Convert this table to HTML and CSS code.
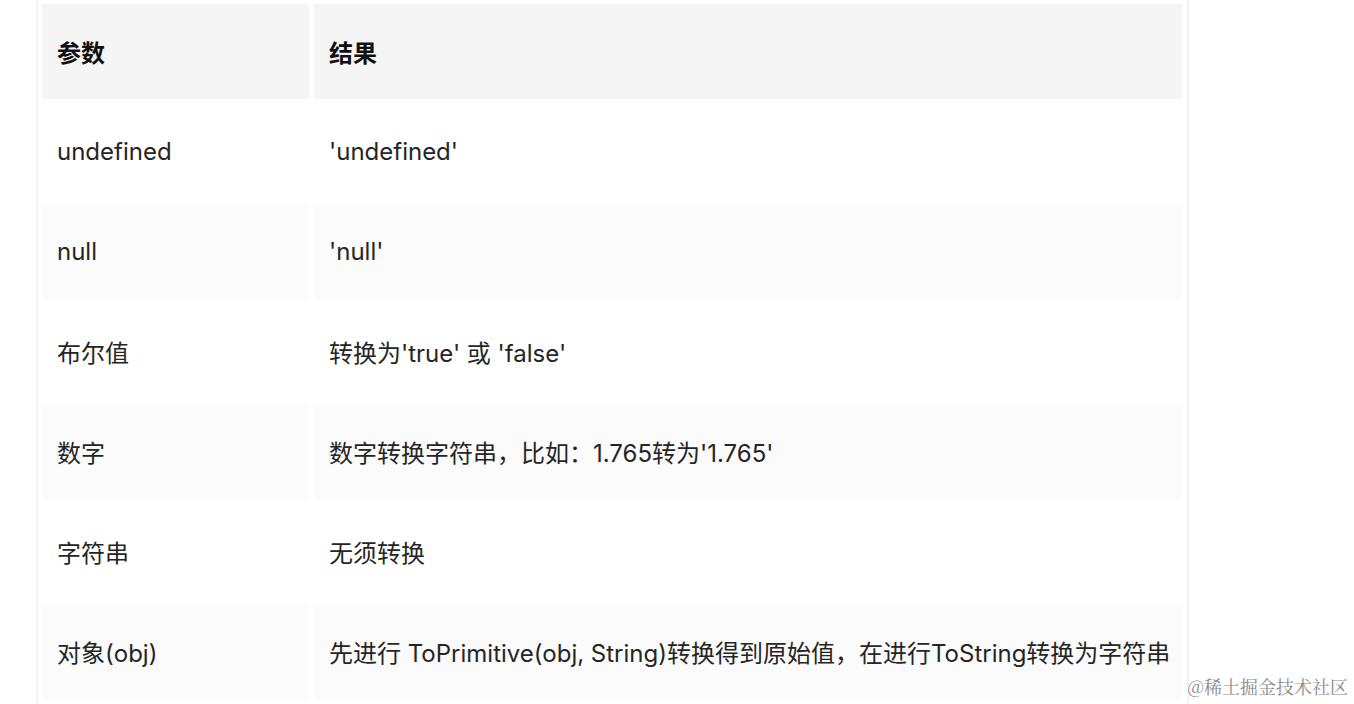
FILE: index.html
```html
<!DOCTYPE html>
<html lang="zh-CN">
<head>
<meta charset="utf-8">
<title>表格</title>
<link rel="stylesheet" href="styles.css">
</head>
<body>
<div class="frame">
  <div class="table">
    <div class="cell head">参数</div>
    <div class="cell head">结果</div>

    <div class="cell">undefined</div>
    <div class="cell">'undefined'</div>

    <div class="cell alt">null</div>
    <div class="cell alt">'null'</div>

    <div class="cell">布尔值</div>
    <div class="cell">转换为'true' 或 'false'</div>

    <div class="cell alt">数字</div>
    <div class="cell alt">数字转换字符串，比如：1.765转为'1.765'</div>

    <div class="cell">字符串</div>
    <div class="cell">无须转换</div>

    <div class="cell alt">对象(obj)</div>
    <div class="cell alt">先进行 ToPrimitive(obj, String)转换得到原始值，在进行ToString转换为字符串</div>
  </div>
</div>
<div class="watermark">@稀土掘金技术社区</div>
</body>
</html>
```
FILE: styles.css
```css
html, body {
  margin: 0;
  padding: 0;
  background: #ffffff;
  height: 704px;
  overflow: hidden;
}

body {
  font-family: Inter, "Noto Sans CJK SC", sans-serif;
  color: #252525;
  position: relative;
}

.frame {
  margin-left: 36px;
  width: 1149px;
  height: 704px;
  border-left: 2px solid #f3f3f3;
  border-right: 2px solid #f3f3f3;
  box-sizing: content-box;
}

.table {
  display: grid;
  grid-template-columns: 267px 868px;
  grid-auto-rows: 95px;
  gap: 5px 5px;
  padding: 4px 0 0 4px;
}

.cell {
  display: flex;
  align-items: center;
  padding-left: 15px;
  font-size: 24px;
  background: #ffffff;
  white-space: nowrap;
}

.cell.head {
  background: #f5f5f5;
  font-weight: 700;
  color: #111111;
}

.cell.alt {
  background: #fbfbfb;
}

.watermark {
  position: absolute;
  right: 6px;
  bottom: 5px;
  font-family: "Noto Serif CJK SC", "Liberation Serif", serif;
  font-size: 18px;
  color: #8a8a8a;
}
```
